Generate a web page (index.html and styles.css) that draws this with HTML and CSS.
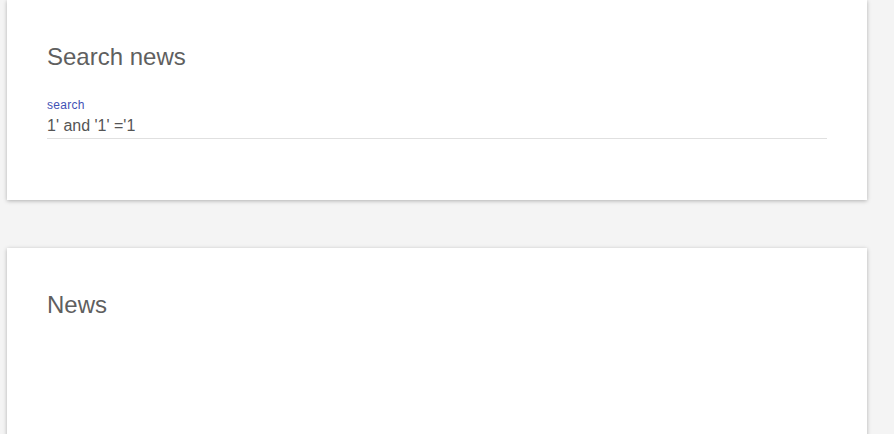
FILE: index.html
```html
<!DOCTYPE html>
<html>
<head>
<meta charset="utf-8">
<link rel="stylesheet" href="styles.css">
</head>
<body>
<main class="page">
  <section class="card card-search">
    <h2 class="card-title">Search news</h2>
    <div class="field">
      <label class="field-label">search</label>
      <div class="field-input">1' and '1' ='1</div>
    </div>
  </section>
  <section class="card card-news">
    <h2 class="card-title">News</h2>
  </section>
</main>
</body>
</html>
```
FILE: styles.css
```css
html, body {
  margin: 0;
  padding: 0;
  background: #f4f4f4;
  font-family: "Liberation Sans", Arial, sans-serif;
  overflow: hidden;
}
.page {
  display: flex;
  flex-direction: column;
  gap: 48px;
  padding-left: 7px;
}
.card {
  width: 860px;
  box-sizing: border-box;
  background: #fff;
  padding: 43px 40px 0 40px;
  box-shadow: 0 1px 4px rgba(0, 0, 0, 0.28);
}
.card-search {
  height: 200px;
}
.card-news {
  height: 260px;
}
.card-title {
  margin: 0;
  font-size: 24px;
  line-height: 28px;
  font-weight: normal;
  color: #5f5f5f;
}
.field {
  margin-top: 27px;
  display: flex;
  flex-direction: column;
}
.field-label {
  font-size: 12px;
  line-height: 14px;
  letter-spacing: 0.3px;
  color: #3f51b5;
}
.field-input {
  margin-top: 4px;
  font-size: 16px;
  line-height: 20px;
  color: #555;
  padding-bottom: 2px;
  border-bottom: 1px solid #e0e0e0;
}
```
